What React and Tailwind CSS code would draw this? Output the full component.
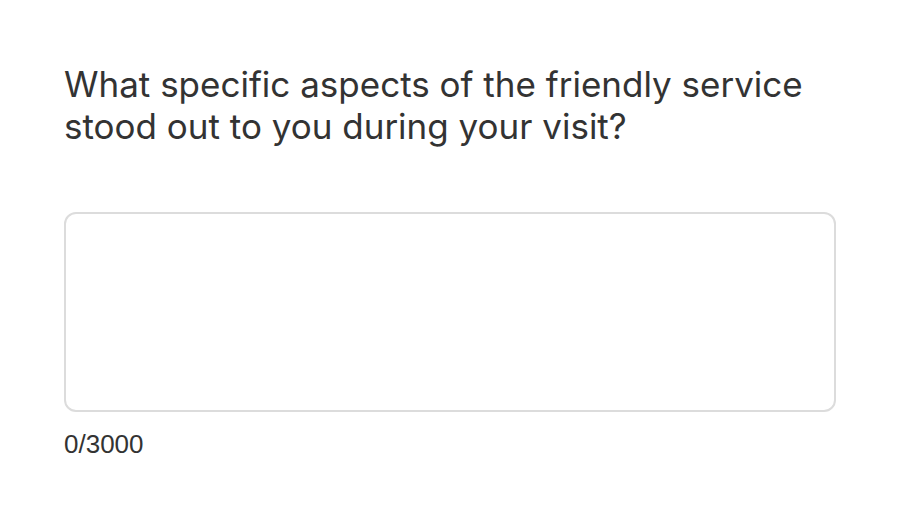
export default function App() {
  return (
    <div className="w-[900px] h-[524px] bg-white px-[64px] pt-[63px]">
      <h1 className="text-[35px] leading-[42px] text-[#333333] font-normal max-w-[772px] tracking-[0px]" style={{ fontFamily: '"Inter", "Noto Sans", sans-serif' }}>
        What specific aspects of the friendly service stood out to you during your visit?
      </h1>
      <div className="mt-[65px] w-[772px] h-[200px] border-2 border-[#dcdcdc] rounded-[12px] bg-white"></div>
      <div className="mt-[17px] text-[26px] leading-[30px] text-[#333333]" style={{ fontFamily: '"Liberation Sans", Arial, sans-serif' }}>0/3000</div>
    </div>
  );
}
